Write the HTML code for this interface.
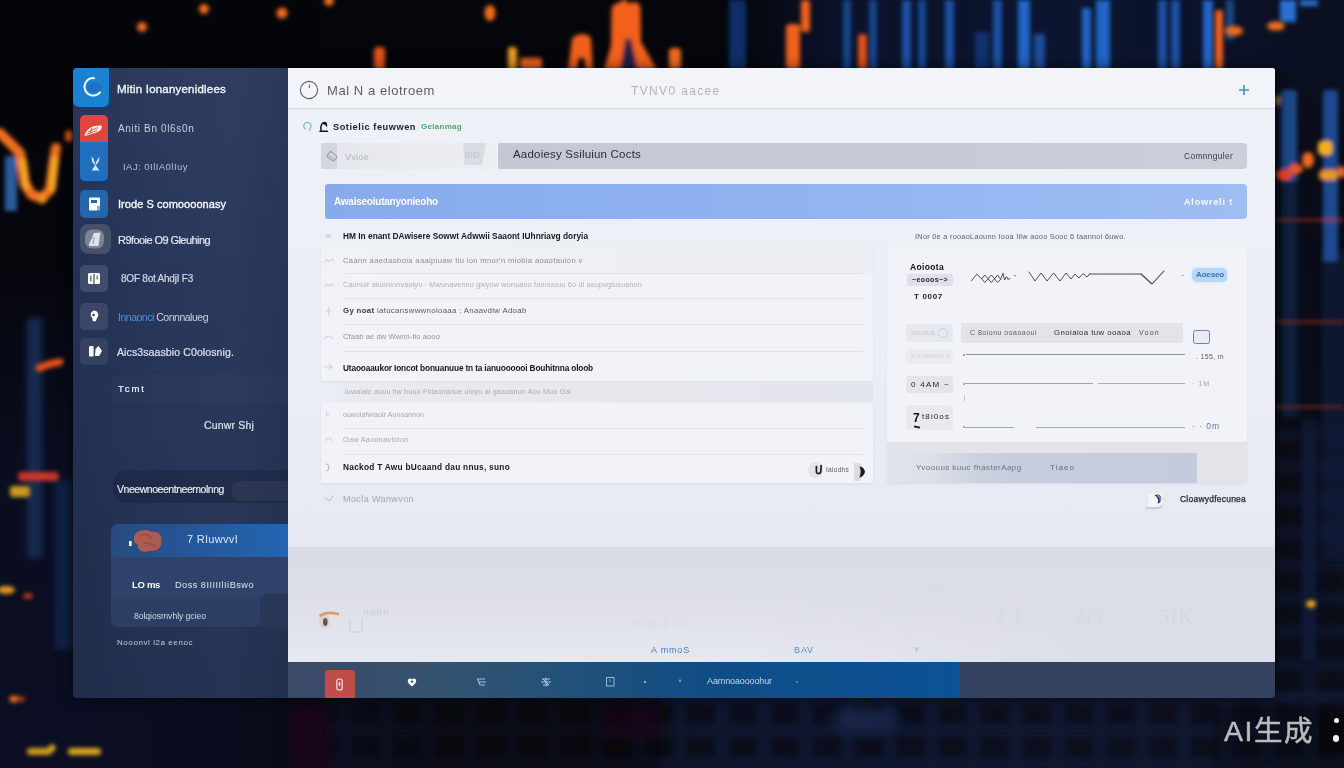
<!DOCTYPE html>
<html lang="en">
<head>
<meta charset="utf-8">
<title>Main dashboard</title>
<style>
*{box-sizing:border-box;margin:0;padding:0}
html,body{width:1344px;height:768px;overflow:hidden;background:#05060b;font-family:"Liberation Sans","Noto Sans CJK SC",sans-serif}
#stage{position:relative;width:1344px;height:768px;overflow:hidden;background:#05060b}
#bg{position:absolute;left:0;top:0;width:1344px;height:768px}
.a{position:absolute}
.t{position:absolute;white-space:nowrap}
#tx{position:absolute;left:0;top:0;width:1344px;height:768px;filter:blur(.3px)}

#win{position:absolute;left:73px;top:68px;width:1202px;height:630px;border-radius:4px;box-shadow:0 0 14px rgba(0,0,0,.6)}
#side{left:73px;top:68px;width:215px;height:630px;border-radius:4px 0 0 4px;background:linear-gradient(180deg,rgba(255,255,255,.025) 0%,rgba(255,255,255,0) 35%,rgba(0,0,0,.10) 100%),linear-gradient(90deg,#233253 0%,#28375a 40%,#2a395c 75%,#263455 100%)}
#main{left:288px;top:68px;width:987px;height:594px;border-radius:0 3px 0 0;background:linear-gradient(180deg,#eef1f8 0%,#eceff6 35%,#e9ecf4 62%,#e6e9f1 81%,#e6e9f1 100%)}
#lower{left:288px;top:547px;width:987px;height:115px;background:linear-gradient(180deg,#dadce6 0%,#dcdee8 100%)}
#lower2{left:288px;top:547px;width:987px;height:115px;background:linear-gradient(180deg,rgba(236,238,245,0) 30%,rgba(236,238,245,.5) 85%,rgba(238,240,246,.6) 100%);-webkit-mask-image:linear-gradient(90deg,#000 0%,#000 45%,transparent 85%);mask-image:linear-gradient(90deg,#000 0%,#000 45%,transparent 85%)}
#bbar{left:288px;top:662px;width:987px;height:36px;border-radius:0 0 4px 0;background:#34415f}
#bblue{left:288px;top:662px;width:672px;height:36px;background:linear-gradient(90deg,#3b4967 0%,#35536f 22%,#215178 42%,#114d85 62%,#0b5296 100%)}
.tile{border-radius:5px}
.ln{height:1px;background:#e0e3ea}
.card{background:#f2f3f8;box-shadow:0 1px 2px rgba(120,130,160,.13)}

</style>
</head>
<body>
<div id="stage">
<svg id="bg" width="1344" height="768" viewBox="0 0 1344 768">
<defs>
<filter id="b2" x="-20%" y="-20%" width="140%" height="140%"><feGaussianBlur stdDeviation="1.9"/></filter>
<filter id="b4" x="-20%" y="-20%" width="140%" height="140%"><feGaussianBlur stdDeviation="3.5"/></filter>
<filter id="b8" x="-30%" y="-30%" width="160%" height="160%"><feGaussianBlur stdDeviation="8"/></filter>
<linearGradient id="topg" x1="0" x2="1" y1="0" y2="0">
<stop offset="0" stop-color="#040509"/><stop offset=".55" stop-color="#05060c"/><stop offset=".62" stop-color="#0b1228"/><stop offset=".8" stop-color="#0c1530"/><stop offset="1" stop-color="#0a0f20"/>
</linearGradient>
<pattern id="grid" width="42" height="33" patternUnits="userSpaceOnUse" x="8" y="697">
<rect width="42" height="33" fill="#182040"/><rect x="6" y="6" width="30" height="22" fill="#07080f"/>
</pattern>
<linearGradient id="leftg" x1="0" x2="0" y1="0" y2="1">
<stop offset="0" stop-color="#040509"/><stop offset=".28" stop-color="#05060c"/><stop offset=".55" stop-color="#090d1e"/><stop offset="1" stop-color="#0b0e22"/>
</linearGradient>
<linearGradient id="rightg" x1="0" x2="0" y1="0" y2="1">
<stop offset="0" stop-color="#0a0f20"/><stop offset=".12" stop-color="#090c16"/><stop offset=".5" stop-color="#0a0d18"/><stop offset="1" stop-color="#0b0f1f"/>
</linearGradient>
<linearGradient id="botg" x1="0" x2="1" y1="0" y2="0">
<stop offset="0" stop-color="#0b0e22"/><stop offset=".2" stop-color="#0a0b1a"/><stop offset=".3" stop-color="#07070d"/><stop offset=".44" stop-color="#07070d"/><stop offset=".5" stop-color="#0b1024"/><stop offset=".85" stop-color="#0c1126"/><stop offset="1" stop-color="#0a0c1a"/>
</linearGradient>
</defs>
<rect width="1344" height="768" fill="#040509"/>
<rect width="1344" height="72" fill="url(#topg)"/>
<!-- left strip -->
<rect x="0" y="68" width="80" height="700" fill="url(#leftg)"/>
<!-- right strip -->
<rect x="1270" y="70" width="74" height="698" fill="url(#rightg)"/>
<!-- bottom strip -->
<rect x="70" y="690" width="1274" height="78" fill="url(#botg)"/>
<g filter="url(#b4)" opacity=".22"><rect x="330" y="690" width="330" height="90" fill="url(#grid)"/></g>
<g filter="url(#b4)" opacity=".42"><rect x="660" y="690" width="690" height="90" fill="url(#grid)"/></g>
<g filter="url(#b4)" opacity=".35"><rect x="1276" y="430" width="80" height="270" fill="url(#grid)"/></g>
<g filter="url(#b8)">
<rect x="290" y="706" width="40" height="70" fill="#2a0d1c" opacity=".45"/>
<rect x="600" y="704" width="60" height="36" fill="#2a0d1c" opacity=".4"/>
<ellipse cx="865" cy="720" rx="34" ry="10" fill="#1c2c55" opacity=".9"/>
</g>
<!-- top blue bars -->
<g filter="url(#b2)" fill="#1b4fa3">
<rect x="729" y="0" width="17" height="70" fill="#0f2f68"/>
<rect x="843" y="0" width="8" height="70" opacity=".8"/>
<rect x="869" y="0" width="8" height="70" opacity=".8"/>
<rect x="902" y="0" width="9" height="70"/>
<rect x="918" y="0" width="8" height="70" opacity=".85"/>
<rect x="945" y="0" width="9" height="70"/>
<rect x="975" y="32" width="14" height="38" fill="#143a80" opacity=".8"/>
<rect x="993" y="0" width="9" height="70"/>
<rect x="1018" y="0" width="12" height="70" fill="#2465c6"/>
<rect x="1034" y="34" width="11" height="36" fill="#1c4c9c"/>
<rect x="1082" y="8" width="9" height="62" fill="#2465c6"/>
<rect x="1096" y="0" width="14" height="70" fill="#2465c6"/>
<rect x="1158" y="0" width="9" height="70"/>
<rect x="1171" y="0" width="9" height="70"/>
<rect x="1203" y="0" width="10" height="70" fill="#2465c6"/>
<rect x="1226" y="0" width="8" height="40" fill="#1a4488"/>
<rect x="1280" y="0" width="16" height="22" fill="#2a6fd0"/>
<rect x="1300" y="0" width="18" height="6" fill="#2a6fd0"/>
</g>
<!-- right strip bars -->
<g filter="url(#b4)">
<rect x="1282" y="176" width="15" height="240" fill="#10254c" opacity=".75"/>
<rect x="1322" y="250" width="24" height="310" fill="#0e1f40" opacity=".7"/>
<rect x="1302" y="420" width="14" height="240" fill="#0d1a38" opacity=".8"/>
</g>
<g filter="url(#b2)">
<rect x="1281" y="90" width="16" height="92" rx="3" fill="#1a4687"/>
<rect x="1323" y="90" width="15" height="172" rx="3" fill="#1a498f"/>
<rect x="1276" y="96" width="3" height="9" fill="#c9a22a"/>
<rect x="1276" y="219" width="68" height="2" fill="#9c2f1c"/>
<rect x="1276" y="321" width="68" height="2" fill="#9c2f1c"/>
<rect x="1276" y="406" width="68" height="2" fill="#8a2a1a"/>
<ellipse cx="1284" cy="175" rx="8" ry="5.500" fill="#e8431c"/>
<ellipse cx="1296" cy="169" rx="7" ry="5" fill="#ef5a1e"/>
<ellipse cx="1308" cy="160" rx="6" ry="8" fill="#f06a1e"/>
<rect x="1318" y="141" width="14" height="14" rx="4" fill="#f3b21d"/>
<rect x="1319" y="170" width="19" height="10" rx="4" fill="#e89a22"/>
<ellipse cx="1342" cy="172" rx="4" ry="6" fill="#ee6a1e"/>
<ellipse cx="1311" cy="604" rx="5" ry="4" fill="#e7a21f"/>
</g>
<!-- orange top -->
<g filter="url(#b2)" fill="#f06a1d">
<circle cx="142" cy="27" r="5"/>
<circle cx="204" cy="9" r="5"/>
<circle cx="282" cy="13" r="5.5"/>
<circle cx="329" cy="1" r="5"/>
<ellipse cx="490" cy="13" rx="5.5" ry="8"/>
<rect x="374" y="47" width="11" height="24" rx="4" fill="#e0521b"/>
<rect x="508" y="47" width="9" height="24" rx="3" fill="#e89a22"/>
<rect x="520" y="58" width="22" height="12" rx="3" fill="#e8621c"/>
<path d="M568 70 L572 40 C573 33 590 32 591 39 L593 70 L586 70 L584 58 L579 58 L577 70 Z" fill="#f0601c"/>
<path d="M604 70 L611 46 L611.500 10 C612 3 618 4 620 2 L622 0 L627 0 L628 4 C634 0 640 2 640.500 8 L641 42 L657 70 L638 70 L631 40 L626 38 L620 70 Z" fill="#f2601d"/>
<path d="M620 70 L626 38 L631 40 L638 70 Z" fill="#1c2048"/>
<rect x="669" y="48" width="12" height="22" rx="4" fill="#ef6a1e"/>
<rect x="786" y="24" width="14" height="46" rx="4" fill="#f0621c"/>
<rect x="801" y="0" width="9" height="32" rx="3" fill="#f0621c"/>
<rect x="858" y="34" width="9" height="36" rx="3" fill="#e24f1b"/>
<rect x="1215" y="10" width="8" height="60" rx="3" fill="#ef5f1d"/>
<ellipse cx="1234" cy="31" rx="9" ry="5" fill="#ef6a1e"/>
<ellipse cx="1276" cy="26" rx="9" ry="4.5" fill="#ef6f1e"/>
</g>
<!-- left strip -->
<g filter="url(#b4)">
<rect x="27" y="318" width="15" height="240" fill="#13294f"/>
<rect x="55" y="480" width="18" height="170" fill="#12284e" opacity=".8"/>
</g>
<g filter="url(#b2)">
<rect x="5" y="156" width="12" height="55" fill="#2b5c9e"/>
<path d="M0 133 L8 141 L20 153 L25 184 L32 195 L42 198 L50 190 L54 160 L56 148" stroke="#f0701c" stroke-width="10" fill="none" stroke-linecap="round" stroke-linejoin="round"/>
<path d="M23 162 L26 186 M52 188 L55 160" stroke="#f6a020" stroke-width="8" fill="none" stroke-linecap="round"/><ellipse cx="42" cy="198" rx="5" ry="6" fill="#f08a1e"/>
<ellipse cx="69" cy="136" rx="4" ry="6" fill="#e85a1c"/>
<path d="M39 368 L50 364 L60 362" stroke="#f0521b" stroke-width="7" stroke-linecap="round" fill="none"/>
<rect x="18" y="472" width="41" height="9" rx="4" fill="#c9352a"/>
<rect x="10" y="486" width="20" height="11" rx="3" fill="#c99a23"/>
<ellipse cx="6" cy="590" rx="9" ry="4" fill="#e59a20"/>
<ellipse cx="28" cy="596" rx="5" ry="3" fill="#b83a22"/>
<ellipse cx="14" cy="699" rx="5" ry="3.5" fill="#e96f1d"/>
<ellipse cx="22" cy="699" rx="3" ry="2.5" fill="#b8401f"/>
<rect x="27" y="748" width="25" height="7" rx="3.5" fill="#d19c1f"/>
<circle cx="52" cy="748" r="3.5" fill="#e0b02a"/>
<rect x="68" y="748" width="33" height="7" rx="3.5" fill="#e0a81f"/>
</g>
</svg>


<div id="win" class="a"></div>
<div id="side" class="a"></div>
<div id="main" class="a"></div>
<div id="lower" class="a"></div>
<div id="lower2" class="a"></div>
<div id="bbar" class="a"></div>
<div id="bblue" class="a"></div>

<!-- ============ sidebar ============ -->
<div class="a" style="left:73px;top:68px;width:36px;height:39px;background:#1c82d0;border-radius:4px 0 6px 6px"></div>
<svg class="a" style="left:73px;top:68px" width="36" height="39" viewBox="0 0 36 39"><ellipse cx="22" cy="19.500" rx="7.600" ry="5" fill="#1b72c7"/><path d="M21.060 10.130 A8.700 8.700 0 1 0 26.960 24.390" fill="none" stroke="#f4faff" stroke-width="2" stroke-linecap="round"/></svg>

<div class="a" style="left:80px;top:115px;width:28px;height:27px;background:#e2453d;border-radius:5px 5px 0 0"></div>
<svg class="a" style="left:80px;top:115px" width="28" height="29" viewBox="0 0 28 29"><path d="M4.500 20.500 C7 13 13 10 21.500 10.500 C23 14 19 17.500 13 18.500 L5 21 Z" fill="#fdeeea"/><path d="M8 17 L18 12.500 M7 19.200 L17 15.500 M12 13 L10 18" stroke="#e2453d" stroke-width=".9" fill="none"/></svg>
<div class="a" style="left:80px;top:142px;width:28px;height:39px;background:#1f6fbe;border-radius:0 0 5px 5px"></div>
<svg class="a" style="left:80px;top:143px" width="28" height="38" viewBox="0 0 28 38"><path d="M11.500 13.500 L13 15 L15.500 20 L18.500 15 L19.500 13.500 L19 18 L15.800 22.500 L19.500 27.500 H11.500 L15 22.500 L12 18.500 Z" fill="#d4e9fc"/><path d="M13.500 18 L16 20 L14.500 22" fill="none" stroke="#1f6fbe" stroke-width=".9"/></svg>

<div class="a tile" style="left:80px;top:190px;width:28px;height:28px;background:#2565ab"></div>
<svg class="a" style="left:80px;top:190px" width="28" height="28" viewBox="0 0 28 28"><rect x="9" y="7.5" width="11" height="13" rx="1" fill="#fff"/><rect x="11" y="10" width="6" height="3" fill="#2565ab"/><rect x="17" y="16" width="3" height="5" fill="#2565ab" opacity=".5"/></svg>

<div class="a" style="left:80px;top:224px;width:31px;height:30px;background:#475069;border-radius:8px"></div>
<svg class="a" style="left:80px;top:225px" width="31" height="29" viewBox="0 0 31 29"><rect x="5" y="4.500" width="19" height="19" rx="7" fill="#7b8397"/><path d="M9 21 C9 17 12 15 12.500 11 L14 8 L20.500 7.500 L18.500 21 Z" fill="#dfe2ea"/><path d="M14 12 L13 19" stroke="#9aa1b2" stroke-width="1.200"/></svg>

<div class="a tile" style="left:80px;top:265px;width:28px;height:27px;background:#404c6b"></div>
<svg class="a" style="left:80px;top:265px" width="28" height="27" viewBox="0 0 28 27"><rect x="8" y="8" width="12" height="11" rx="1.5" fill="#fff"/><rect x="13.4" y="9" width="1.2" height="10" fill="#404c6b"/><rect x="10" y="10.5" width="1.6" height="6" fill="#404c6b" opacity=".7"/><rect x="16.5" y="10.5" width="1.6" height="4" fill="#404c6b" opacity=".7"/></svg>

<div class="a tile" style="left:80px;top:303px;width:28px;height:27px;background:#3b4767"></div>
<svg class="a" style="left:80px;top:303px" width="28" height="27" viewBox="0 0 28 27"><path d="M14 7.5 a4.3 4.3 0 0 1 3 7.4 l-1.2 3.3 h-3 l-.4 -3 a4.3 4.3 0 0 1 1.6 -7.7 Z" fill="#fff"/><circle cx="13.6" cy="12" r="1.3" fill="#3b4767"/></svg>

<div class="a tile" style="left:80px;top:338px;width:28px;height:27px;background:#34415f"></div>
<svg class="a" style="left:80px;top:338px" width="28" height="27" viewBox="0 0 28 27"><rect x="9" y="8" width="4.6" height="10.5" rx="1.2" fill="#fff"/><path d="M15 18 L15.5 11 L18.5 8 L22 13 L19 18 Z" fill="#fff"/></svg>

<div class="a" style="left:111px;top:375px;width:177px;height:27px;background:rgba(255,255,255,.014);border-radius:5px 0 0 5px"></div>
<div class="a" style="left:113px;top:470px;width:175px;height:33px;background:rgba(18,26,48,.32);border-radius:14px 0 0 14px;filter:blur(.7px)"></div>
<div class="a" style="left:232px;top:481px;width:56px;height:20px;background:rgba(255,255,255,.05);border-radius:8px 0 0 8px"></div>

<div class="a" style="left:111px;top:524px;width:177px;height:33px;background:linear-gradient(90deg,#274a80,#25589b 50%,#2464b0);border-radius:7px 0 0 0"></div>
<svg class="a" style="left:126px;top:527px" width="40" height="28" viewBox="0 0 40 28"><rect x="3" y="14" width="2.6" height="5" rx=".6" fill="#fff"/><path d="M9 8 C12 2 22 2 26 5 C32 4 37 9 35 14 C37 19 31 25 24 24 C18 26 11 24 12 18 C7 16 7 11 9 8 Z" fill="#b85d4f" opacity=".92"/><path d="M14 9 C18 6 24 8 26 12 M17 16 C21 15 27 17 30 20" stroke="#9d4338" stroke-width="2" fill="none" opacity=".6"/></svg>
<div class="a" style="left:111px;top:557px;width:177px;height:41px;background:#2e426a"></div>
<div class="a" style="left:111px;top:598px;width:149px;height:29px;background:#2c3e63;border-radius:0 0 6px 6px"></div>
<div class="a" style="left:260px;top:594px;width:28px;height:33px;background:#293757;border-radius:8px 0 0 0"></div>

<!-- ============ main header ============ -->
<div class="a" style="left:288px;top:68px;width:987px;height:40px;background:#f2f4f9;border-radius:0 3px 0 0"></div>
<div class="a" style="left:288px;top:108px;width:987px;height:1px;background:#d4d7e1"></div>
<svg class="a" style="left:298px;top:79px" width="22" height="22" viewBox="0 0 22 22"><circle cx="11" cy="11" r="8.6" fill="none" stroke="#5b5e68" stroke-width="1.1"/><path d="M11.3 5.6 V9" stroke="#5b5e68" stroke-width="1"/></svg>
<svg class="a" style="left:1237px;top:83px" width="14" height="14" viewBox="0 0 14 14"><path d="M7 2 V12 M2 7 H12" stroke="#3a98c4" stroke-width="1.6"/></svg>

<svg class="a" style="left:300px;top:119px" width="32" height="16" viewBox="0 0 32 16"><path d="M5.5 10 A3.6 3.6 0 1 1 11 7.5 L9.5 11.5" fill="none" stroke="#7db6de" stroke-width="1.200" stroke-linecap="round"/><path d="M20 12.2 H27.5 M21.2 12 C20 7 22 3.4 24.2 3.4 C26 3.6 26.5 5.6 26.6 7" fill="none" stroke="#16171b" stroke-width="1.500" stroke-linecap="round"/><path d="M22.500 4.800 C23.500 2.600 26 2.400 27 4.200 L25.200 6.200 Z" fill="#16171b"/></svg>

<!-- search row -->
<div class="a" style="left:321px;top:143px;width:174px;height:26px;background:linear-gradient(90deg,#e5e7ed,#e9ebf1 60%,#eceef3);border-radius:2px"></div>
<div class="a" style="left:321px;top:143px;width:16px;height:26px;background:#d3d6de;border-radius:2px 0 0 2px"></div>
<svg class="a" style="left:324px;top:149px" width="16" height="16" viewBox="0 0 16 16"><rect x="3.5" y="4.2" width="9" height="6.2" rx="1.6" transform="rotate(38 8 7.3)" fill="none" stroke="#9a9eaa" stroke-width="1.1"/><path d="M4.6 6 L10.2 10.4" stroke="#9a9eaa" stroke-width=".9"/></svg>
<div class="a" style="left:463px;top:143px;width:23px;height:22px;background:#d9dce4;clip-path:polygon(0 0,100% 0,82% 100%,6% 100%)"></div>
<div class="a" style="left:498px;top:143px;width:749px;height:26px;background:linear-gradient(90deg,#c4c8d5,#c7cbd8 60%,#cbcfda);border-radius:2px 4px 4px 2px"></div>
<!-- blue bar -->
<div class="a" style="left:325px;top:184px;width:922px;height:35px;background:linear-gradient(90deg,#86aaec,#92b4f0 55%,#9dbdf3);border-radius:3px 4px 4px 3px"></div>

<!-- list cards -->
<div class="a card" style="left:321px;top:247px;width:552px;height:134px"></div>
<div class="a" style="left:321px;top:247px;width:552px;height:26px;background:linear-gradient(90deg,#f1f2f7,#edeff4 60%,#ebedf2)"></div>
<div class="a ln" style="left:343px;top:273px;width:520px"></div>
<div class="a ln" style="left:343px;top:298px;width:520px"></div>
<div class="a ln" style="left:343px;top:324px;width:520px"></div>
<div class="a ln" style="left:343px;top:351px;width:520px"></div>
<div class="a" style="left:343px;top:383px;width:530px;height:19px;background:linear-gradient(90deg,#e9ebf0,#e3e5ec)"></div>
<div class="a card" style="left:321px;top:403px;width:552px;height:80px"></div>
<div class="a ln" style="left:343px;top:428px;width:520px"></div>
<div class="a ln" style="left:343px;top:454px;width:520px"></div>
<!-- tiny row icons -->
<svg class="a" style="left:322px;top:228px" width="14" height="280" viewBox="0 0 14 280" fill="none" stroke="#d2d5dd" stroke-width="1.1" stroke-linecap="round">
<path d="M3.5 9.5 H9.5 L8.5 6 H4.5 Z" fill="#d2d5dd" stroke="none"/>
<path d="M2.5 34 L5 31.5 L7 33.5 L10 31 L12 34"/>
<path d="M2.5 58 L5 56 L7.5 58 L10 55.5 L12 58"/>
<path d="M6.5 79 V87 M4 83 H9"/>
<path d="M3 111 C4 107 9 107 10.5 111"/>
<path d="M2.5 139 H9 M7 136 L10 139 L7 142"/>
<path d="M4.5 184 C4 187 6.5 189 7 186"/>
<path d="M3.5 213 C4 209 9 209 9.5 213"/>
<path d="M4 236 C7 236 8 241 5 243" stroke="#b5b9c4"/>
<path d="M3 269.500 C5 272 7 273 8 272.500 L11 268" stroke="#c3c6d0"/>
</svg>
<!-- pill in last row -->
<div class="a" style="left:808px;top:462px;width:15px;height:16px;border-radius:8px;background:#e3e5eb"></div>
<svg class="a" style="left:813px;top:462px" width="14" height="16" viewBox="0 0 14 16"><path d="M3.400 4.500 V9.600 C3.400 12.200 7.600 12.200 7.800 9.400 L8.200 3.600" fill="none" stroke="#1b1c20" stroke-width="1.7" stroke-linecap="round"/></svg>
<svg class="a" style="left:852px;top:461px" width="16" height="22" viewBox="0 0 16 22"><path d="M2 2 H7 C10 4 12 8 12 12 L8 20 H2 Z" fill="#d9dce3"/><path d="M7.5 5.5 C11 6 14 9 12.5 12.5 C11.5 14.8 9 16 7.2 16.6 C9 13 9.2 9 7.5 5.5 Z" fill="#1b1c20"/></svg>

<!-- right card -->
<div class="a card" style="left:887px;top:247px;width:360px;height:236px;border-radius:3px"></div>
<div class="a" style="left:887px;top:442px;width:360px;height:41px;background:#e2e4ea;border-radius:0 0 3px 3px"></div>
<div class="a" style="left:887px;top:453px;width:310px;height:30px;background:linear-gradient(90deg,#e1e3ea 0%,#dde0e8 14%,#cdd2e0 28%,#c7cddd 40%,#c5cbdc 100%);border-radius:0 2px 0 3px"></div>
<div class="a" style="left:907px;top:274px;width:46px;height:12px;background:#dfe1e8;border-radius:2px;filter:blur(.6px)"></div>
<div class="a" style="left:1192px;top:268px;width:35px;height:14px;background:#b7d6f6;border-radius:5px;box-shadow:0 0 3px #c5def7"></div>
<svg class="a" style="left:965px;top:262px" width="225" height="30" viewBox="0 0 225 30" fill="none" stroke="#3a3c45" stroke-width=".9" stroke-linejoin="round" stroke-linecap="round">
<path d="M6.400 18.900 L11.800 12.200 L16.700 16.800 L19.800 13 L23.200 16.800 L26.400 13 L29.600 16.800 L32.700 13 L35.500 17.500 L38 11.300 L39.600 18 L41.500 14.500 L43 17.600 L44.800 16.400"/>
<path d="M16.700 16.800 L19.800 20.500 L23.200 16.800 L26.400 20.500 L29.600 16.800 L32.700 20.500 L35.500 17.500"/>
<circle cx="50" cy="13.5" r=".7" fill="#555" stroke="none"/>
<path d="M64 10 L70 19 L76 11 L82 19 L88.5 11 L95 19 L101 11 L106 17 L110 12 L114 16 L118 11.5 L122 15 L124.5 12"/>
<path d="M124.500 12 H176" stroke-dasharray="1.3 1.1" stroke-width="1.2"/>
<path d="M176 12 L187 22 L199 9" stroke-width="1.050"/>
<circle cx="218" cy="13.5" r=".7" fill="#889" stroke="none"/>
</svg>
<div class="a" style="left:906px;top:324px;width:47px;height:18px;background:#e7e9ee;border-radius:3px;filter:blur(.5px)"></div>
<div class="a" style="left:938px;top:328px;width:10px;height:10px;border-radius:5px;border:1px solid #bcd3ea;background:#e3ecf6"></div>
<div class="a" style="left:961px;top:323px;width:222px;height:20px;background:#e2e4ea;border-radius:2px"></div>
<div class="a" style="left:1193px;top:330px;width:17px;height:14px;border:1.3px solid #6f83ab;background:#e6ebf5;border-radius:2.5px"></div>
<div class="a" style="left:906px;top:349px;width:47px;height:15px;background:#eaecf1;border-radius:3px"></div>
<div class="a" style="left:966px;top:353.500px;width:219px;height:1.800px;background:#8a95a3;filter:blur(.4px)"></div><div class="a" style="left:963px;top:354px;width:2px;height:1.500px;background:#9aa3af"></div>
<div class="a" style="left:906px;top:376px;width:47px;height:17px;background:#e3e5ea;border-radius:3px;filter:blur(.5px)"></div>
<div class="a" style="left:964px;top:383px;width:129px;height:1px;background:#9aa5b3"></div>
<div class="a" style="left:1098px;top:383px;width:87px;height:1px;background:#a5aebb"></div>
<div class="a" style="left:963.500px;top:395px;width:1px;height:6px;background:#c4c8d2"></div><div class="a" style="left:963px;top:382.500px;width:2px;height:2px;background:#aab1bc"></div><div class="a" style="left:963px;top:426px;width:2px;height:2px;background:#aab1bc"></div>
<div class="a" style="left:906px;top:405px;width:47px;height:25px;background:#e8eaef;border-radius:3px;filter:blur(.5px)"></div>
<div class="a" style="left:914px;top:425.500px;width:6px;height:1.6px;background:#16171b;transform:rotate(12deg)"></div>
<div class="a" style="left:964px;top:426.500px;width:50px;height:1px;background:#9da6b3"></div>
<div class="a" style="left:1036px;top:426.500px;width:149px;height:1px;background:#a2abb8"></div>
<svg class="a" style="left:1143px;top:489px" width="24" height="24" viewBox="0 0 24 24"><path d="M4.500 3.500 H16 C18.500 3.500 20 5 20 7.500 V15 C20 18.500 18 20.500 14.500 20.500 H2 C4 18.500 4.500 16.500 4.500 14 Z" fill="#f4f5f9" stroke="#e2e5ec" stroke-width=".8"/><path d="M11.500 6.500 C15 4 19.500 7 18 11.500 C17.500 13.500 16 14.500 14.500 14.500 C16 12 15 8 11.500 6.500 Z" fill="#26344e"/><path d="M14 6.500 C17 7 18 10 17 12.500" stroke="#7e9cc4" stroke-width="1.500" fill="none"/><path d="M3 19 H14.500 C16.500 19 18 18 18.500 16.500" stroke="#c3cddd" stroke-width="2" fill="none"/></svg>

<!-- lower band faint items -->
<svg class="a" style="left:314px;top:604px" width="90" height="36" viewBox="0 0 90 36"><ellipse cx="10.500" cy="17.500" rx="5.500" ry="7" fill="#ddd2c8" opacity=".9"/><ellipse cx="11.300" cy="18" rx="2.300" ry="4" fill="#5f5560"/><path d="M6.500 11.500 C11 8.500 18 8.500 24 10" stroke="#d99c6b" stroke-width="2.800" fill="none" stroke-linecap="round"/><path d="M36 16 V28 M38 28 H44 M48 14 V28" stroke="#d5d8e1" stroke-width="2" fill="none"/></svg>

<!-- bottom bar -->
<div class="a" style="left:325px;top:670px;width:30px;height:28px;background:#bf4e4b;border-radius:4px 4px 0 0"></div>
<svg class="a" style="left:325px;top:670px" width="30" height="28" viewBox="0 0 30 28"><rect x="11.800" y="9" width="5.400" height="11" rx="2.600" fill="none" stroke="#f4dedd" stroke-width="1.200"/><rect x="13.600" y="12" width="1.800" height="4" rx=".9" fill="#f4dedd"/></svg>
<svg class="a" style="left:400px;top:670px" width="420" height="24" viewBox="0 0 420 24" fill="none">
<path d="M12 16.500 C8 13.500 7.200 11.500 8.200 9.600 C9.200 7.900 11.300 8.100 12 9.600 C12.700 8.100 14.800 7.900 15.800 9.600 C16.800 11.500 16 13.500 12 16.500 Z" fill="#fff"/><circle cx="12" cy="11.600" r="1.200" fill="#2f5475"/>
<path d="M77 9 H85 M79 12 H86 M80 15 H85 M77.500 9 L80 15" stroke="#9fc0dc" stroke-width="1.100"/>
<path d="M142 9 H150 M141 12 H151 M143 15 H149 M146 7.500 V16.500 M143 9 L149 15" stroke="#a9c8e2" stroke-width="1"/>
<rect x="206.500" y="7.500" width="7.500" height="8.500" stroke="#8fb7d9" stroke-width="1"/><path d="M210 9 V12" stroke="#8fb7d9" stroke-width=".8"/>
<circle cx="245" cy="12" r=".9" fill="#cfe2f2"/><path d="M280 9.500 V12" stroke="#cfe2f2" stroke-width="1"/><circle cx="397" cy="12" r=".8" fill="#9cc3e4"/>
</svg>

<!-- watermark -->
<div class="a" style="left:1213px;top:706px;width:131px;height:62px;background:rgba(8,9,16,.42);border-radius:16px 0 0 0;filter:blur(1.500px)"></div>
<div class="a" style="left:1319px;top:713px;width:25px;height:40px;background:#06060c"></div>
<div class="a" style="left:1334px;top:718px;width:5px;height:5px;border-radius:3px;background:#f2f2f2"></div>
<div class="a" style="left:1333px;top:735px;width:6px;height:7px;border-radius:3px;background:#f2f2f2"></div>

<div id="tx">
<div class="t" id="t0" style="left:117px;top:83.1px;font-size:11.5px;height:13.8px;line-height:13.8px;color:#f4f6fb;letter-spacing:0.208px;-webkit-text-stroke:.35px #f4f6fb;">Mitin Ionanyenidlees</div>
<div class="t" id="t1" style="left:118px;top:123.0px;font-size:10px;height:12.0px;line-height:12.0px;color:#c9d0e0;letter-spacing:0.643px;">Aniti  Bn 0l6s0n</div>
<div class="t" id="t2" style="left:123px;top:161.3px;font-size:9.5px;height:11.4px;line-height:11.4px;color:#b5bdd2;letter-spacing:0.460px;">IAJ: 0IlIA0lIuy</div>
<div class="t" id="t3" style="left:118px;top:198.4px;font-size:11px;height:13.2px;line-height:13.2px;color:#f4f6fb;letter-spacing:0.052px;-webkit-text-stroke:.35px #f4f6fb;">Irode S comoooonasy</div>
<div class="t" id="t4" style="left:118px;top:234.4px;font-size:11px;height:13.2px;line-height:13.2px;color:#e4e8f1;letter-spacing:-0.565px;-webkit-text-stroke:.2px #e4e8f1;">R9fooie O9 Gleuhing</div>
<div class="t" id="t5" style="left:121px;top:273.0px;font-size:10px;height:12.0px;line-height:12.0px;color:#d3d9e7;letter-spacing:-0.226px;-webkit-text-stroke:.2px #d3d9e7;">8OF 8ot AhdjI F3</div>
<div class="t" id="t6" style="left:118px;top:310.7px;font-size:10.5px;height:12.6px;line-height:12.6px;color:#cbd2e1;letter-spacing:-0.488px;"><span style="color:#4f8fe8">Innaonci</span> Connnalueg</div>
<div class="t" id="t7" style="left:117px;top:345.7px;font-size:10.5px;height:12.6px;line-height:12.6px;color:#dde2ed;letter-spacing:0.113px;-webkit-text-stroke:.2px #dde2ed;">Aics3saasbio C0olosnig.</div>
<div class="t" id="t8" style="left:118px;top:383.3px;font-size:9.5px;height:11.4px;line-height:11.4px;color:#f0f3f9;letter-spacing:1.984px;-webkit-text-stroke:.2px #f0f3f9;">Tcmt</div>
<div class="t" id="t9" style="left:204px;top:418.7px;font-size:10.5px;height:12.6px;line-height:12.6px;color:#dce1ec;letter-spacing:0.174px;-webkit-text-stroke:.2px #dce1ec;">Cunwr Shj</div>
<div class="t" id="t10" style="left:117px;top:482.7px;font-size:10.5px;height:12.6px;line-height:12.6px;color:#e4e8f1;letter-spacing:-0.459px;-webkit-text-stroke:.2px #e4e8f1;">Vneewnoeentneemolnng</div>
<div class="t" id="t11" style="left:187px;top:533.4px;font-size:11px;height:13.2px;line-height:13.2px;color:#dbe6f6;letter-spacing:0.300px;">7 RIuwvvI</div>
<div class="t" id="t12" style="left:132px;top:579.3px;font-size:9.5px;height:11.4px;line-height:11.4px;color:#ffffff;font-weight:700;letter-spacing:-0.312px;">LO ms</div>
<div class="t" id="t13" style="left:175px;top:579.5px;font-size:9.2px;height:11.0px;line-height:11.0px;color:#dde2ed;letter-spacing:0.474px;">Doss 8IIIIIlIiBswo</div>
<div class="t" id="t14" style="left:134px;top:610.8px;font-size:8.6px;height:10.3px;line-height:10.3px;color:#d0d6e4;letter-spacing:-0.034px;">8olqiosmvhly gcieo</div>
<div class="t" id="t15" style="left:117px;top:638.2px;font-size:8px;height:9.6px;line-height:9.6px;color:#c3cadb;letter-spacing:0.572px;">Nooonvl l2a eenoc</div>
<div class="t" id="t16" style="left:327px;top:83.2px;font-size:13px;height:15.6px;line-height:15.6px;color:#5b5e68;letter-spacing:0.563px;">Mal N a elotroem</div>
<div class="t" id="t17" style="left:631px;top:83.8px;font-size:12px;height:14.4px;line-height:14.4px;color:#b1b4be;letter-spacing:1.357px;">TVNV0  aacee</div>
<div class="t" id="t18" style="left:333px;top:121.5px;font-size:9.2px;height:11.0px;line-height:11.0px;color:#1d1e23;font-weight:700;letter-spacing:0.561px;">Sotielic feuwwen</div>
<div class="t" id="t19" style="left:421px;top:122.2px;font-size:8px;height:9.6px;line-height:9.6px;color:#4ea56f;font-weight:700;letter-spacing:0.289px;">Gelanmag</div>
<div class="t" id="t20" style="left:345px;top:151.6px;font-size:9px;height:10.8px;line-height:10.8px;color:#b0b5c1;letter-spacing:0.297px;">Vvioe</div>
<div class="t" id="t21" style="left:465px;top:149.6px;font-size:9px;height:10.8px;line-height:10.8px;color:#c3c7d1;font-weight:700;letter-spacing:0.328px;">0lD</div>
<div class="t" id="t22" style="left:513px;top:148.1px;font-size:11.5px;height:13.8px;line-height:13.8px;color:#2a2c35;letter-spacing:0.201px;">Aadoiesy Ssiluiun Cocts</div>
<div class="t" id="t23" style="left:1184px;top:150.9px;font-size:8.5px;height:10.2px;line-height:10.2px;color:#3b3e48;letter-spacing:0.269px;">Comnnguler</div>
<div class="t" id="t24" style="left:334px;top:196.0px;font-size:10px;height:12.0px;line-height:12.0px;color:#ffffff;font-weight:700;letter-spacing:-0.237px;">Awaiseoiutanyonieoho</div>
<div class="t" id="t25" style="left:1184px;top:196.6px;font-size:9px;height:10.8px;line-height:10.8px;color:#f6f9ff;font-weight:700;letter-spacing:0.848px;">Alowreli t</div>
<div class="t" id="t26" style="left:343px;top:231.0px;font-size:8.3px;height:10.0px;line-height:10.0px;color:#17181c;font-weight:700;letter-spacing:0.020px;">HM In enant DAwisere Sowwt Adwwii Saaont IUhnriavg doryia</div>
<div class="t" id="t27" style="left:343px;top:256.4px;font-size:7.6px;height:9.1px;line-height:9.1px;color:#8a8e99;letter-spacing:0.354px;">Caann aaedaoboia aaalpiuaw tlu ion mnor&#x27;n miobia  aoaofauion v</div>
<div class="t" id="t28" style="left:343px;top:280.6px;font-size:7.3px;height:8.8px;line-height:8.8px;color:#adb1bc;letter-spacing:0.139px;">Caonuir aiuonionvaoiyu · Mwunavennu gwyow wunuauo fanouuuo 6o di aeupvgiusuanon</div>
<div class="t" id="t29" style="left:343px;top:306.3px;font-size:7.8px;height:9.4px;line-height:9.4px;color:#555862;letter-spacing:0.340px;"><b style="color:#3a3c45">Gy noat</b> iatucanswwwnoioaaa : Anaavdiw  Adoab</div>
<div class="t" id="t30" style="left:343px;top:332.4px;font-size:7.6px;height:9.1px;line-height:9.1px;color:#8f939e;letter-spacing:0.061px;">Cfaab ae dw  Wwnn-tio aooo</div>
<div class="t" id="t31" style="left:343px;top:363.0px;font-size:8.3px;height:10.0px;line-height:10.0px;color:#17181c;font-weight:700;letter-spacing:-0.163px;">Utaooaaukor Ioncot bonuanuue tn ta ianuoooooi Bouhitnna oloob</div>
<div class="t" id="t32" style="left:345px;top:387.7px;font-size:7.2px;height:8.6px;line-height:8.6px;color:#a7abb6;letter-spacing:0.155px;">iuwaiaic aouu  tiw  buuo Fhiaonanue oioyu ai gaaoanun  Aou  Muo Gai</div>
<div class="t" id="t33" style="left:343px;top:410.9px;font-size:6.8px;height:8.2px;line-height:8.2px;color:#a4a8b3;letter-spacing:0.154px;">ouwoiafwiaoir Aunoannon</div>
<div class="t" id="t34" style="left:343px;top:435.7px;font-size:7.2px;height:8.6px;line-height:8.6px;color:#a4a8b3;letter-spacing:0.333px;">Oaw  Aaoonavtoion</div>
<div class="t" id="t35" style="left:343px;top:462.0px;font-size:8.3px;height:10.0px;line-height:10.0px;color:#17181c;font-weight:700;letter-spacing:0.267px;">Nackod T Awu bUcaand dau nnus, suno</div>
<div class="t" id="t36" style="left:826px;top:466.1px;font-size:6.5px;height:7.8px;line-height:7.8px;color:#5a5d67;letter-spacing:0.290px;">Ialodhs</div>
<div class="t" id="t37" style="left:343px;top:493.6px;font-size:9px;height:10.8px;line-height:10.8px;color:#a2a6b1;letter-spacing:0.407px;">Mocla Wanwvon</div>
<div class="t" id="t38" style="left:915px;top:232.6px;font-size:7.3px;height:8.8px;line-height:8.8px;color:#5d616c;letter-spacing:0.290px;">INor   0e  a rooaoLaounn Iooa  Iiiw aooo Sooc 6 taannoi 6uwo.</div>
<div class="t" id="t39" style="left:910px;top:261.9px;font-size:8.5px;height:10.2px;line-height:10.2px;color:#111216;font-weight:700;letter-spacing:0.337px;">Aoioota</div>
<div class="t" id="t40" style="left:912px;top:275.8px;font-size:7px;height:8.4px;line-height:8.4px;color:#2a2c33;font-weight:700;letter-spacing:0.389px;">~eooos~&gt;</div>
<div class="t" id="t41" style="left:914px;top:292.2px;font-size:8px;height:9.6px;line-height:9.6px;color:#1c1d22;font-weight:700;letter-spacing:0.682px;">T 0007</div>
<div class="t" id="t42" style="left:1196px;top:270.2px;font-size:8px;height:9.6px;line-height:9.6px;color:#3473bd;font-weight:700;letter-spacing:-0.151px;">Aoeseo</div>
<div class="t" id="t43" style="left:911px;top:329.1px;font-size:6.5px;height:7.8px;line-height:7.8px;color:#c5c9d3;letter-spacing:0.383px;">ouuaua</div>
<div class="t" id="t44" style="left:970px;top:328.8px;font-size:7px;height:8.4px;line-height:8.4px;color:#5a5d67;letter-spacing:0.483px;">C 8oionu ooaoaoui</div>
<div class="t" id="t45" style="left:1054px;top:328.3px;font-size:7.8px;height:9.4px;line-height:9.4px;color:#2c2e36;letter-spacing:0.424px;">Gnoiaioa tuw ooaoa</div>
<div class="t" id="t46" style="left:1139px;top:328.8px;font-size:7px;height:8.4px;line-height:8.4px;color:#4a4d57;letter-spacing:1.258px;">Voon</div>
<div class="t" id="t47" style="left:911px;top:352.1px;font-size:6.5px;height:7.8px;line-height:7.8px;color:#cdd0d9;letter-spacing:0.267px;">a u oaoaoi e</div>
<div class="t" id="t48" style="left:1196px;top:352.8px;font-size:7px;height:8.4px;line-height:8.4px;color:#5d616c;letter-spacing:0.338px;">. 155, m</div>
<div class="t" id="t49" style="left:911px;top:380.2px;font-size:8px;height:9.6px;line-height:9.6px;color:#1c1d22;letter-spacing:1.283px;">0 4AM ~</div>
<div class="t" id="t50" style="left:1192px;top:378.5px;font-size:7.5px;height:9.0px;line-height:9.0px;color:#a5a9b4;letter-spacing:0.800px;">·  1M</div>
<div class="t" id="t51" style="left:913px;top:410.8px;font-size:12px;height:14.4px;line-height:14.4px;color:#111216;font-weight:700;letter-spacing:0.312px;">7</div>
<div class="t" id="t52" style="left:922px;top:412.2px;font-size:8px;height:9.6px;line-height:9.6px;color:#22242a;letter-spacing:1.107px;">t8i0os</div>
<div class="t" id="t53" style="left:1192px;top:420.9px;font-size:8.5px;height:10.2px;line-height:10.2px;color:#4d82c4;letter-spacing:0.975px;">· ·   0m</div>
<div class="t" id="t54" style="left:916px;top:463.2px;font-size:8px;height:9.6px;line-height:9.6px;color:#6d727d;letter-spacing:0.432px;">Yvoouus  kuuc fhasterAapg</div>
<div class="t" id="t55" style="left:1050px;top:462.7px;font-size:8px;height:9.6px;line-height:9.6px;color:#666b77;letter-spacing:1.056px;">Tiaeo</div>
<div class="t" id="t56" style="left:1180px;top:494.4px;font-size:8.5px;height:10.2px;line-height:10.2px;color:#25272e;letter-spacing:0.224px;-webkit-text-stroke:.25px #25272e;">Cloawydfecunea</div>
<div class="t" id="t57" style="left:363px;top:607.1px;font-size:9px;height:10.8px;line-height:10.8px;color:#cdd0da;font-weight:700;letter-spacing:1.250px;">nunn</div>
<div class="t" id="t58" style="left:631px;top:618.0px;font-size:10px;height:12.0px;line-height:12.0px;color:#d7d9e2;letter-spacing:1.249px;">anug 2 I 0,</div>
<div class="t" id="t59" style="left:996px;top:607.2px;font-size:18px;height:21.6px;line-height:21.6px;color:#d5d7e1;letter-spacing:2.500px;font-family:'Liberation Serif',serif;filter:blur(.6px);">2  I</div>
<div class="t" id="t60" style="left:1075px;top:607.2px;font-size:18px;height:21.6px;line-height:21.6px;color:#d5d7e1;letter-spacing:2.500px;font-family:'Liberation Serif',serif;filter:blur(.6px);">2ia</div>
<div class="t" id="t61" style="left:1160px;top:607.2px;font-size:18px;height:21.6px;line-height:21.6px;color:#d3d5df;letter-spacing:2.500px;font-family:'Liberation Serif',serif;filter:blur(.6px);">5iK</div>
<div class="t" id="t62" style="left:651px;top:644.6px;font-size:9px;height:10.8px;line-height:10.8px;color:#4b7abb;letter-spacing:0.831px;">A mmoS</div>
<div class="t" id="t63" style="left:794px;top:644.6px;font-size:9px;height:10.8px;line-height:10.8px;color:#5a8bc9;letter-spacing:0.885px;">BAV</div>
<div class="t" id="t64" style="left:914px;top:645.2px;font-size:8px;height:9.6px;line-height:9.6px;color:#a0a4af;letter-spacing:0.656px;">Y</div>
<div class="t" id="t65" style="left:707px;top:675.6px;font-size:9px;height:10.8px;line-height:10.8px;color:#c3d6ea;letter-spacing:-0.120px;">Aamnoaoooohur</div>
<div class="t" id="t66" style="left:1224px;top:713.9px;font-size:28.5px;height:34.2px;line-height:34.2px;color:#bbbbbd;letter-spacing:1.516px;-webkit-text-stroke:.5px #bbbbbd;">AI生成</div>
</div>
</div>
</body>
</html>
